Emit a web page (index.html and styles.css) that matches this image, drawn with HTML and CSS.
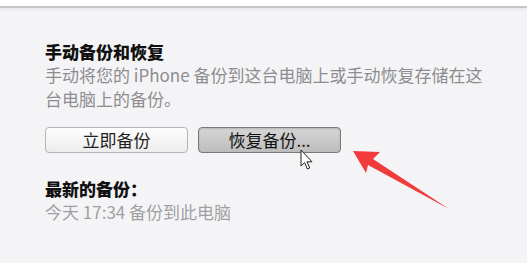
FILE: index.html
```html
<!DOCTYPE html>
<html lang="zh-CN">
<head>
    <meta charset="UTF-8">
    <meta name="viewport" content="width=device-width, initial-scale=1.0">
    <title>手动备份和恢复</title>
    <link rel="stylesheet" href="styles.css">
</head>
<body>

<div class="top-bar"></div>

<div class="panel">
    <h3 class="title">手动备份和恢复</h3>
    <p class="desc">手动将您的 iPhone 备份到这台电脑上或手动恢复存储在这台电脑上的备份。</p>

    <div class="button-row">
        <button class="btn">立即备份</button>
        <button class="btn btn-pressed">恢复备份...</button>
    </div>

    <h4 class="title latest-title">最新的备份：</h4>
    <p class="latest">今天 17:34 备份到此电脑</p>
</div>

<!-- mouse pointer over the restore button -->
<svg class="cursor" width="14" height="22" viewBox="0 0 14 22">
    <path d="M1 1 L1 17 L4.6 13.6 L7.4 20 L9.8 19 L7 12.8 L12 12.8 Z" fill="#fff" stroke="#222" stroke-width="1" stroke-linejoin="round"/>
</svg>

<!-- red annotation arrow -->
<svg class="annotation" width="527" height="263" viewBox="0 0 527 263">
    <polygon points="353,151 380,152 373,159 449,209 368,165 366,173" fill="#f23b3b"/>
</svg>

</body>
</html>
```

FILE: styles.css
```css
body {
    font-family: "Noto Sans CJK SC", "Noto Sans", sans-serif;
    background-color: #f4f4f6;
    margin: 0;
    width: 527px;
    height: 263px;
    overflow: hidden;
    position: relative;
}
.top-bar {
    height: 6px;
    background: #fff;
    border-bottom: 2px solid #c6c6c8;
    box-shadow: 0 2px 3px rgba(0, 0, 0, 0.05);
}
.panel {
    padding: 33px 0 0 45px;
}
.title {
    margin: 0;
    font-size: 17px;
    line-height: 22px;
    font-weight: 900;
    color: #111;
}
.desc {
    margin: 0;
    width: 448px;
    font-size: 17px;
    line-height: 24px;
    color: #8d8d8f;
}
.button-row {
    display: flex;
    gap: 10px;
    margin-top: 16px;
}
.btn {
    width: 143px;
    height: 26px;
    padding: 0;
    font-family: inherit;
    font-size: 17px;
    line-height: 24px;
    color: #1e1e1e;
    background: linear-gradient(#fefefe, #ececec);
    border: 1px solid #b4b4b6;
    border-radius: 4px;
}
.btn-pressed {
    color: #111;
    background: linear-gradient(#d6d6d6, #bdbdbd);
    border-color: #78787a;
    box-shadow: inset 0 1px 2px rgba(0, 0, 0, 0.15);
}
.latest-title {
    margin-top: 25px;
}
.latest {
    margin: 0;
    font-size: 17px;
    line-height: 24px;
    color: #a0a0a2;
}
.cursor {
    position: absolute;
    left: 300px;
    top: 149px;
}
.annotation {
    position: absolute;
    left: 0;
    top: 0;
}
```
